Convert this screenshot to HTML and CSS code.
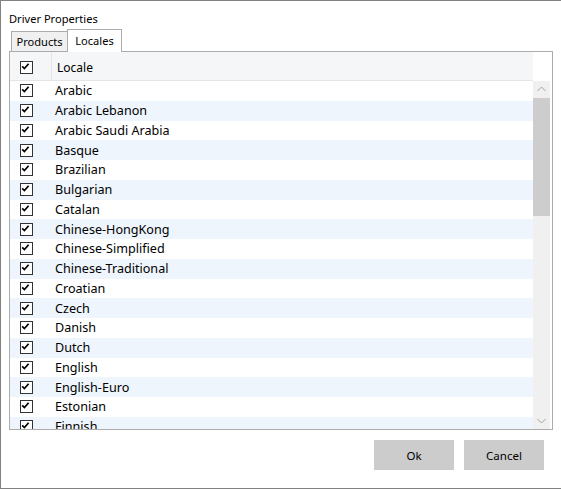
FILE: index.html
```html
<!DOCTYPE html>
<html>
<head>
<meta charset="utf-8">
<link rel="stylesheet" href="styles.css">
</head>
<body>
<div class="window">
  <div class="title">Driver Properties</div>
  <div class="tabs">
    <div class="tab">Products</div>
    <div class="tab active">Locales</div>
  </div>
  <div class="panel">
    <div class="header">
      <div class="hcell chkcol"><span class="cb"><svg viewBox="0 0 13 13"><path d="M2.6 6.4 L5.2 9 L10.2 3.2"/></svg></span></div>
      <div class="hcell namecol">Locale</div>
      <div class="hfill"></div>
    </div>
    <div class="content">
      <div class="rows">
        <div class="row"><span class="cell chkcol"><span class="cb"><svg viewBox="0 0 13 13"><path d="M2.6 6.4 L5.2 9 L10.2 3.2"/></svg></span></span><span class="cell name">Arabic</span></div>
        <div class="row"><span class="cell chkcol"><span class="cb"><svg viewBox="0 0 13 13"><path d="M2.6 6.4 L5.2 9 L10.2 3.2"/></svg></span></span><span class="cell name">Arabic Lebanon</span></div>
        <div class="row"><span class="cell chkcol"><span class="cb"><svg viewBox="0 0 13 13"><path d="M2.6 6.4 L5.2 9 L10.2 3.2"/></svg></span></span><span class="cell name">Arabic Saudi Arabia</span></div>
        <div class="row"><span class="cell chkcol"><span class="cb"><svg viewBox="0 0 13 13"><path d="M2.6 6.4 L5.2 9 L10.2 3.2"/></svg></span></span><span class="cell name">Basque</span></div>
        <div class="row"><span class="cell chkcol"><span class="cb"><svg viewBox="0 0 13 13"><path d="M2.6 6.4 L5.2 9 L10.2 3.2"/></svg></span></span><span class="cell name">Brazilian</span></div>
        <div class="row"><span class="cell chkcol"><span class="cb"><svg viewBox="0 0 13 13"><path d="M2.6 6.4 L5.2 9 L10.2 3.2"/></svg></span></span><span class="cell name">Bulgarian</span></div>
        <div class="row"><span class="cell chkcol"><span class="cb"><svg viewBox="0 0 13 13"><path d="M2.6 6.4 L5.2 9 L10.2 3.2"/></svg></span></span><span class="cell name">Catalan</span></div>
        <div class="row"><span class="cell chkcol"><span class="cb"><svg viewBox="0 0 13 13"><path d="M2.6 6.4 L5.2 9 L10.2 3.2"/></svg></span></span><span class="cell name">Chinese-HongKong</span></div>
        <div class="row"><span class="cell chkcol"><span class="cb"><svg viewBox="0 0 13 13"><path d="M2.6 6.4 L5.2 9 L10.2 3.2"/></svg></span></span><span class="cell name">Chinese-Simplified</span></div>
        <div class="row"><span class="cell chkcol"><span class="cb"><svg viewBox="0 0 13 13"><path d="M2.6 6.4 L5.2 9 L10.2 3.2"/></svg></span></span><span class="cell name">Chinese-Traditional</span></div>
        <div class="row"><span class="cell chkcol"><span class="cb"><svg viewBox="0 0 13 13"><path d="M2.6 6.4 L5.2 9 L10.2 3.2"/></svg></span></span><span class="cell name">Croatian</span></div>
        <div class="row"><span class="cell chkcol"><span class="cb"><svg viewBox="0 0 13 13"><path d="M2.6 6.4 L5.2 9 L10.2 3.2"/></svg></span></span><span class="cell name">Czech</span></div>
        <div class="row"><span class="cell chkcol"><span class="cb"><svg viewBox="0 0 13 13"><path d="M2.6 6.4 L5.2 9 L10.2 3.2"/></svg></span></span><span class="cell name">Danish</span></div>
        <div class="row"><span class="cell chkcol"><span class="cb"><svg viewBox="0 0 13 13"><path d="M2.6 6.4 L5.2 9 L10.2 3.2"/></svg></span></span><span class="cell name">Dutch</span></div>
        <div class="row"><span class="cell chkcol"><span class="cb"><svg viewBox="0 0 13 13"><path d="M2.6 6.4 L5.2 9 L10.2 3.2"/></svg></span></span><span class="cell name">English</span></div>
        <div class="row"><span class="cell chkcol"><span class="cb"><svg viewBox="0 0 13 13"><path d="M2.6 6.4 L5.2 9 L10.2 3.2"/></svg></span></span><span class="cell name">English-Euro</span></div>
        <div class="row"><span class="cell chkcol"><span class="cb"><svg viewBox="0 0 13 13"><path d="M2.6 6.4 L5.2 9 L10.2 3.2"/></svg></span></span><span class="cell name">Estonian</span></div>
        <div class="row"><span class="cell chkcol"><span class="cb"><svg viewBox="0 0 13 13"><path d="M2.6 6.4 L5.2 9 L10.2 3.2"/></svg></span></span><span class="cell name">Finnish</span></div>
      </div>
      <div class="scrollbar">
        <div class="arrow"><svg viewBox="0 0 17 17"><path d="M4.5 10 L8.5 6 L12.5 10"/></svg></div>
        <div class="track"><div class="thumb"></div></div>
        <div class="arrow"><svg viewBox="0 0 17 17"><path d="M4.5 7 L8.5 11 L12.5 7"/></svg></div>
      </div>
    </div>
  </div>
  <div class="buttons">
    <button class="btn">Ok</button>
    <button class="btn">Cancel</button>
  </div>
</div>
</body>
</html>
```
FILE: styles.css
```css
html, body {
  margin: 0;
  padding: 0;
  background: #ffffff;
}
body {
  font-family: "Noto Sans", "Open Sans", sans-serif;
  font-size: 12px;
  color: #000;
}
.window {
  box-sizing: border-box;
  width: 561px;
  height: 489px;
  border: 1px solid #828282;
  border-right: none;
  background: #fff;
  display: flex;
  flex-direction: column;
}
.title {
  height: 16px;
  line-height: 16px;
  margin-top: 10px;
  padding-left: 8px;
  font-size: 11.1px;
}
.tabs {
  display: flex;
  align-items: flex-end;
  height: 22px;
  margin-top: 2px;
  padding-left: 10px;
  position: relative;
  z-index: 1;
  font-size: 11.1px;
}
.tab {
  box-sizing: border-box;
  height: 20px;
  line-height: 20px;
  padding: 0;
  width: 57px;
  text-align: center;
  background: #f0f0f0;
  border: 1px solid #acacac;
  border-bottom: none;
}
.tab.active {
  height: 23px;
  width: 55px;
  margin-left: -1px;
  margin-bottom: -1px;
  background: #fff;
  line-height: 21px;
  padding-bottom: 2px;
}
.panel {
  box-sizing: border-box;
  width: 544px;
  height: 379px;
  margin-left: 8px;
  border: 1px solid #acacac;
  background: #fff;
  display: flex;
  flex-direction: column;
  overflow: hidden;
}
.header {
  display: flex;
  height: 29px;
  flex: none;
}
.hcell {
  box-sizing: border-box;
  height: 29px;
  display: flex;
  align-items: center;
  padding-top: 3px;
  background: #f5f6f7;
  border-bottom: 1px solid #e5e5e5;
}
.hcell.chkcol {
  width: 42px;
  border-right: 1px solid #e5e5e5;
  justify-content: flex-start;
  padding-left: 10px;
}
.hcell.namecol {
  width: 481px;
  padding-left: 5px;
}
.hfill {
  flex: 1;
}
.content {
  display: flex;
  flex: 1;
  min-height: 0;
}
.rows {
  width: 523px;
  flex: none;
  overflow: hidden;
  font-size: 12.6px;
}
.row {
  display: flex;
  align-items: center;
  height: 19.75px;
}
.row:nth-child(even) {
  background: #eef5fd;
}
.cell.chkcol {
  width: 45px;
  padding-left: 10px;
  box-sizing: border-box;
  display: flex;
  align-items: center;
}
.cell.name {
  white-space: nowrap;
}
.cb {
  box-sizing: border-box;
  width: 13px;
  height: 13px;
  border: 1px solid #333;
  background: #fff;
  display: block;
}
.cb svg {
  display: block;
  width: 11px;
  height: 11px;
  margin: -1px 0 0 -1px;
  overflow: visible;
}
.cb path {
  fill: none;
  stroke: #000;
  stroke-width: 2;
}
.scrollbar {
  width: 17px;
  display: flex;
  flex-direction: column;
  background: #f0f0f0;
  height: 348px;
}
.arrow {
  height: 17px;
  flex: none;
}
.arrow svg {
  display: block;
  width: 17px;
  height: 17px;
}
.arrow path {
  fill: none;
  stroke: #a3a3a3;
  stroke-width: 1;
}
.track {
  flex: 1;
}
.thumb {
  height: 118px;
  background: #cdcdcd;
}
.buttons {
  display: flex;
  justify-content: flex-end;
  gap: 10px;
  padding-right: 17px;
  margin-top: 10px;
}
.btn {
  width: 80px;
  height: 30px;
  border: 1px solid #cccccc;
  background: #cccccc;
  font-family: "Noto Sans", "Open Sans", sans-serif;
  font-size: 11.5px;
  color: #000;
  padding: 0;
}
```
